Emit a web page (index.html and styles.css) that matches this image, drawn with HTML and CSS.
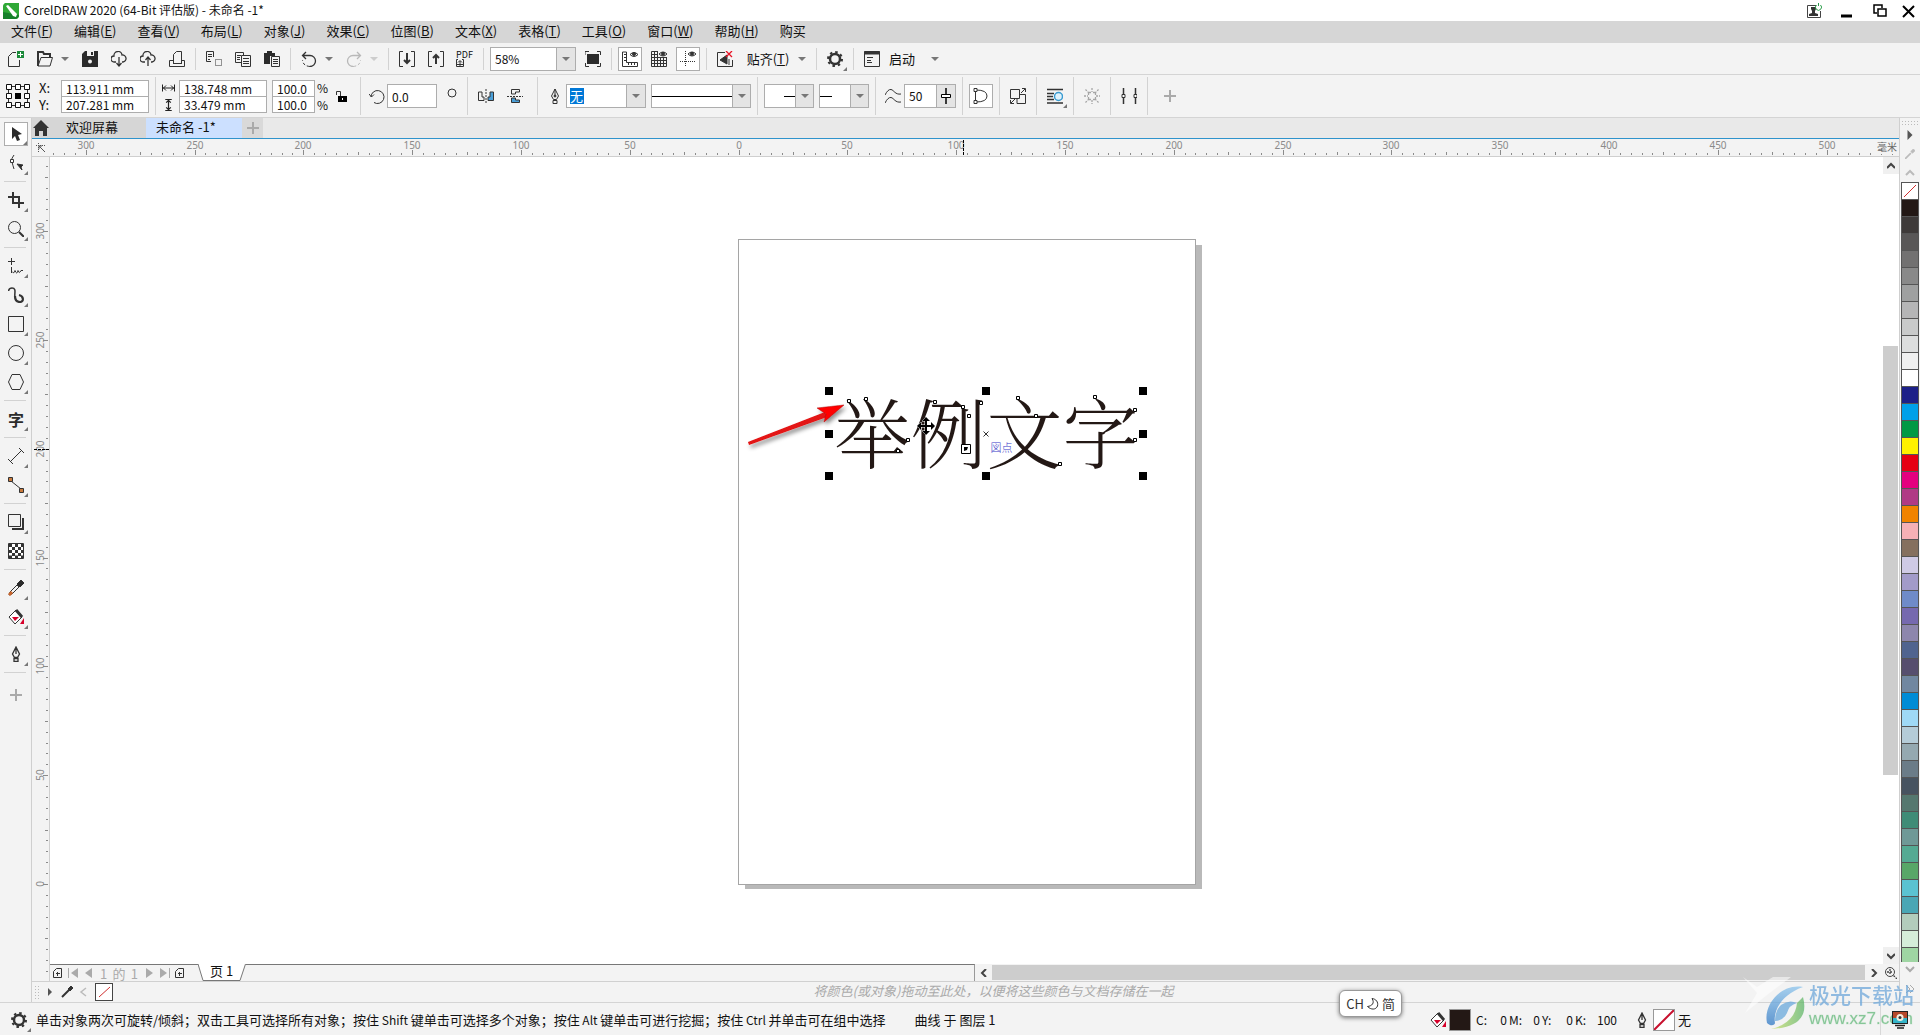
FILE: index.html
```html
<!DOCTYPE html>
<html lang="zh-CN">
<head>
<meta charset="utf-8">
<title>CorelDRAW 2020 (64-Bit 评估版) - 未命名 -1*</title>
<link rel="stylesheet" href="styles.css">
</head>
<body>
<header class="titlebar">
  <svg class="logo" viewBox="0 0 16 16"><path d="M2 0H16V12a4 4 0 0 1-4 4H0V4A4 4 0 0 1 2 0z" fill="#2fa836"/><path d="M0 9V16H12a4 4 0 0 0 4-4z" fill="#16802a"/><path d="M3 3l2-1 9 9-1 3-3-1z" fill="#fff"/></svg>
  <h1>CorelDRAW 2020 (64-Bit 评估版) - 未命名 -1*</h1>
  <div class="winbtns">
    <button class="win" aria-label="账户"><svg viewBox="0 0 16 16"><path d="M10 2.5H1.500V14.500H14.500V8" stroke="#444"/><path d="M3 13v-2l3-1V8L5 6V4h5v2L9 8v2l3 1v2z" fill="#333" stroke="none"/><path d="M10.500 2a3 3 0 1 0 4 0M12.500 0V3" stroke="#2a9d4a"/></svg></button>
    <button class="win" aria-label="最小化"><svg viewBox="0 0 16 16"><path d="M2 13h11" stroke="#000" stroke-width="3"/></svg></button>
    <button class="win" aria-label="还原"><svg viewBox="0 0 16 16"><path d="M5 10H2V2h8v3M6 6h8v7H6z" stroke="#000" stroke-width="1.500"/></svg></button>
    <button class="win" aria-label="关闭"><svg viewBox="0 0 16 16"><path d="M3 3l11 11M14 3L3 14" stroke="#000" stroke-width="2"/></svg></button>
  </div>
</header>

<nav class="menubar" aria-label="主菜单">
  <button>文件(<u>F</u>)</button><button>编辑(<u>E</u>)</button><button>查看(<u>V</u>)</button><button>布局(<u>L</u>)</button><button>对象(<u>J</u>)</button><button>效果(<u>C</u>)</button><button>位图(<u>B</u>)</button><button>文本(<u>X</u>)</button><button>表格(<u>T</u>)</button><button>工具(<u>O</u>)</button><button>窗口(<u>W</u>)</button><button>帮助(<u>H</u>)</button><button>购买</button>
</nav>

<div class="bar standard" role="toolbar" aria-label="标准">
  <button class="tool" aria-label="新建"><svg viewBox="0 0 16 16"><path d="M8 1.500H4.500L.5 5.500V15.500H11.500V9"/><path d="M9 0h7v7H9z" fill="#1b8a3a" stroke="none"/><path d="M12.500 1v5M10 3.500h5" stroke="#fff"/></svg></button>
  <div class="pair"><button class="tool" aria-label="打开"><svg viewBox="0 0 16 16"><path d="M1 15V1h5l1 2h6v3" stroke-width="2"/><path d="M1 15L4 6.500h11.500L13 15z" stroke-width="1"/></svg></button><button class="caret" aria-label="最近打开"></button></div>
  <button class="tool" aria-label="保存"><svg viewBox="0 0 16 16"><path d="M3 0H16V16H0V3z" fill="#2b2b2b" stroke="none"/><path d="M5 0h7v5H5z" fill="#f3f3f3" stroke="none"/><path d="M9 1h2v3H9z" fill="#2b2b2b" stroke="none"/><circle cx="8" cy="10.500" r="2" fill="#f3f3f3" stroke="none"/></svg></button>
  <button class="tool" aria-label="从云下载"><svg viewBox="0 0 16 16"><path d="M5 11H3a3 3 0 0 1 0-6 4 4 0 0 1 8-1 3.500 3.500 0 0 1 1 7h-1M8 6v9M5.500 12L8 15l2.500-3" stroke-width="1.300"/></svg></button>
  <button class="tool" aria-label="上传到云"><svg viewBox="0 0 16 16"><path d="M5 11H3a3 3 0 0 1 0-6 4 4 0 0 1 8-1 3.500 3.500 0 0 1 1 7h-1M8 15V6M5.500 9L8 6l2.500 3" stroke-width="1.300"/></svg></button>
  <button class="tool" aria-label="打印"><svg viewBox="0 0 16 16"><path d="M4.500 12V3.500l3-3h5V12M.5 9.500H4.500M12.500 9.500h3v6H.5v-6M4 12.500h9"/></svg></button>
  <i class="sep"></i>
  <button class="tool" aria-label="剪切"><svg viewBox="0 0 16 16"><path d="M5 10.500H.5V.5h7V6M2 3.500h4M2 5.500h4M2 8.500h2" /><path d="M9.500 8.500h6v6h-6z" stroke-dasharray="1 1"/></svg></button>
  <button class="tool" aria-label="复制"><svg viewBox="0 0 16 16"><path d="M6 11.500H.5V1.500h8V4M2 4.500h4M2 6.500h3M2 8.500h3M6.500 4.500h9v11h-9zM8 7.500h6M8 10.500h6M8 12.500h6"/></svg></button>
  <button class="tool" aria-label="粘贴"><svg viewBox="0 0 16 16"><path d="M0 2h3V0h5v2h3v3H6v8H0z" fill="#2b2b2b" stroke="none"/><path d="M7.500 5.500h8v10h-8zM9 8.500h5M9 10.500h5M9 12.500h5"/></svg></button>
  <i class="sep"></i>
  <div class="pair"><button class="tool" aria-label="撤消"><svg viewBox="0 0 16 16"><path d="M2 4.500H9A5.500 5.500 0 0 1 9 15.500M5 1L1.500 4.500 5 8" stroke-width="1.300"/><path d="M9 15.500Q2 15 1.500 9" stroke-dasharray="3 2"/></svg></button><button class="caret" aria-label="撤消列表"></button></div>
  <div class="pair off"><button class="tool" aria-label="重做" disabled><svg viewBox="0 0 16 16"><path d="M14 4.500H7A5.500 5.500 0 0 0 7 15.500M11 1l3.500 3.500L11 8" stroke-width="1.300"/><path d="M7 15.500Q14 15 14.500 9" stroke-dasharray="3 2"/></svg></button><button class="caret" aria-label="重做列表" disabled></button></div>
  <i class="sep"></i>
  <button class="tool" aria-label="导入"><svg viewBox="0 0 16 16"><path d="M4 .5H.5v15H4M12 .5h3.500v15H12"/><path d="M8 2v10M5 9l3 3 3-3" stroke-width="2"/></svg></button>
  <button class="tool" aria-label="导出"><svg viewBox="0 0 16 16"><path d="M4 .5H.5v15H4M12 .5h3.500v15H12"/><path d="M8 13V4M5 7l3-3 3 3" stroke-width="2"/></svg></button>
  <button class="tool pdf" aria-label="发布为 PDF"><span>PDF</span><svg viewBox="0 0 8 8"><path d="M2 .5H.5v7h7v-7H6M4 7V2M2 3.500L4 1.500l2 2M1 5.500h6"/></svg></button>
  <i class="sep"></i>
  <div class="combo w86"><input aria-label="缩放级别" value="58%"><button class="drop" aria-label="缩放列表"></button></div>
  <button class="tool" aria-label="全屏预览"><svg viewBox="0 0 16 16"><path d="M2 3h12v10H2z" fill="#2b2b2b" stroke="none"/><path d="M0 4V.5h4M12 .5h3.500V4M15.500 12v3.500H12M4 15.500H.5V12"/></svg></button>
  <i class="sep"></i>
  <button class="tool on" aria-label="显示标尺"><svg viewBox="0 0 16 16"><path d="M.5 1v14.500h15v-4h-11V1zM2 3.500h2M2 6.500h2M2 9.500h2M6.500 12v2M9.500 12v2M12.500 12v2" /><path d="M8 3.500q4-4 8 0-4 4-8 0z"/><circle cx="12" cy="3" r="1.500" fill="#333"/></svg></button>
  <button class="tool" aria-label="显示网格"><svg viewBox="0 0 16 16"><path d="M.5.5V15.500h15V7M.5.5H7M3.500 0v16M6.500 0v16M9.500 6v10M12.500 6v10M0 3.500h7M0 6.500h16M0 9.500h16M0 12.500h16"/><path d="M8 3q4-4 8 0-4 4-8 0z"/><circle cx="12" cy="2.800" r="1.500" fill="#333"/></svg></button>
  <button class="tool on" aria-label="显示辅助线"><svg viewBox="0 0 16 16"><path d="M5.500 0v16M0 10.500h16" stroke-dasharray="1 1"/><path d="M8 3q4-4 8 0-4 4-8 0z"/><circle cx="12" cy="2.800" r="1.500" fill="#333"/></svg></button>
  <i class="sep"></i>
  <button class="tool" aria-label="贴齐关闭"><svg viewBox="0 0 16 16"><path d="M8 1.500H.5v14h15V9"/><path d="M10 4L3 9l7 4zM12 8v6" fill="#333"/><path d="M9 0l6 6M15 0L9 6" stroke="#e81123" stroke-width="1.300"/></svg></button>
  <div class="pair"><button class="text snap">贴齐(<u>T</u>)</button><button class="caret" aria-label="贴齐列表"></button></div>
  <i class="sep"></i>
  <button class="tool fly" aria-label="选项"><svg viewBox="0 0 16 16"><circle cx="8" cy="8" r="5" stroke-width="2.500"/><circle cx="8" cy="8" r="7" stroke-width="2" stroke-dasharray="2.500 3"/></svg></button>
  <i class="sep"></i>
  <button class="tool" aria-label="启动图标"><svg viewBox="0 0 16 16"><path d="M.5.5h15v15H.5zM3 6.500h6M3 9.500h4M3 11.500h5"/><path d="M0 2h16" stroke-width="3"/></svg></button>
  <div class="pair launch"><button class="text">启动</button><button class="caret" aria-label="启动列表"></button></div>
</div>

<div class="bar property" role="toolbar" aria-label="属性栏">
  <button class="tool origin" aria-label="对象原点"><svg viewBox="0 0 24 24"><path d="M2.500 2.500h19v19h-19z"/><path d="M.5.5h5v5h-5zM9.500.5h5v5h-5zM18.500.5h5v5h-5zM.5 9.500h5v5h-5zM18.500 9.500h5v5h-5zM.5 18.500h5v5h-5zM9.500 18.500h5v5h-5zM18.500 18.500h5v5h-5z" fill="#fff" stroke="#111"/><path d="M9 9h6v6H9z" fill="#000" stroke="none"/></svg></button>
  <div class="fields xy"><label for="px">X:</label><input id="px" value="113.911 mm"><label for="py">Y:</label><input id="py" value="207.281 mm"></div>
  <i class="sep"></i>
  <div class="fields size"><label for="sw" aria-label="宽度"><svg viewBox="0 0 13 9"><path d="M.5 1v7M12.500 1v7M1 4.500h11M4 2L1.500 4.500 4 7M9 2l2.500 2.500L9 7"/></svg></label><input id="sw" value="138.748 mm"><label for="sh" aria-label="高度"><svg viewBox="0 0 13 13"><path d="M3 .5h7M3 12.500h7M6.500 1v11M4 4l2.500-2.500L9 4M4 9l2.500 2.500L9 9" stroke-width="1.300"/></svg></label><input id="sh" value="33.479 mm"></div>
  <div class="fields pct"><input aria-label="水平缩放" value="100.0"><span>%</span><input aria-label="垂直缩放" value="100.0"><span>%</span></div>
  <button class="tool" aria-label="锁定比率"><svg viewBox="0 0 16 16"><path d="M2.500 7V3.500h4V8"/><path d="M4 8h9v6H4z" fill="#000" stroke="none"/><path d="M8 10h1v2H8z" fill="#fff" stroke="none"/></svg></button>
  <i class="sep"></i>
  <div class="angle"><svg class="ic" viewBox="0 0 16 16"><path d="M2 9A6.500 6.500 0 1 1 5 14.500M0 6l2.500 3L5 6.500" /></svg><input aria-label="旋转角度" value="0.0"></div>
  <svg class="ic deg" viewBox="0 0 16 16"><circle cx="8" cy="5" r="4"/></svg>
  <i class="sep"></i>
  <button class="tool" aria-label="水平镜像"><svg viewBox="0 0 16 16"><path d="M.5 4v8.500H6V9H4V4z"/><path d="M15.500 4v8.500H10V9h2V4z" fill="#4a9fd8"/><path d="M8 1v14" stroke-dasharray="2 1"/></svg></button>
  <button class="tool" aria-label="垂直镜像"><svg viewBox="0 0 16 16"><path d="M4.500 6V1.500h8V4h-4v2z"/><path d="M4.500 10v4.500h8V12h-4v-2z" fill="#4a9fd8"/><path d="M0 8.500h16" stroke-dasharray="2 1"/></svg></button>
  <i class="sep wide"></i>
  <svg class="ic pen" viewBox="0 0 16 16"><path d="M8 1L4.500 8l2 3.500h3l2-3.500zM8 1v7M6 12.500h4v3H6z"/><circle cx="8" cy="8" r="1" fill="#333"/></svg>
  <div class="combo w80"><input class="marked" aria-label="轮廓宽度" value="无"><button class="drop" aria-label="轮廓宽度列表"></button></div>
  <div class="pick w100"><select aria-label="线条样式"></select><span class="stroke"></span></div>
  <i class="sep"></i>
  <div class="pick w50"><select aria-label="起始箭头"></select><span class="stroke end"></span></div>
  <div class="pick w50"><select aria-label="终止箭头"></select><span class="stroke start"></span></div>
  <i class="sep"></i>
  <svg class="ic smooth" viewBox="0 0 16 16"><path d="M0 7Q3 1 6 1.500C9 2 10 7 16 6M0 15Q3 9 6 9.500C9 10 10 15 16 14"/></svg>
  <div class="combo w52"><input aria-label="手绘平滑" value="50"><button class="slide" aria-label="平滑滑块"><svg viewBox="0 0 10 16"><path d="M5 0v16" stroke="#000" stroke-width="1.500"/><path d="M.5 6.500h9v3h-9z" fill="#fff" stroke="#000"/></svg></button></div>
  <i class="sep"></i>
  <button class="tool on" aria-label="闭合曲线"><svg viewBox="0 0 16 16"><path d="M3 2Q14 2 14 8T3 14M2.500 4v8"/><path d="M1 .5h3v3H1zM1 12.500h3v3H1z" fill="#fff"/></svg></button>
  <i class="sep"></i>
  <button class="tool" aria-label="选择工具"><svg viewBox="0 0 16 16"><path d="M.5 1.500h9v9h-9zM7 10.500v5h8.500V6.500H10M11 5l4-4M12 .5h3.500V4M5 11l-4 4M.5 12v3.500H4"/></svg></button>
  <i class="sep"></i>
  <button class="tool fly" aria-label="文本换行"><svg viewBox="0 0 16 16"><path d="M0 1.500h16M0 5.500h7M0 8.500h6M0 11.500h7M0 15h16" stroke-width="1.500"/><circle cx="11.500" cy="8.500" r="4" stroke="#3a9bd0" fill="#dff2fc" stroke-width="1.500"/></svg></button>
  <i class="sep"></i>
  <button class="tool faint" aria-label="对称" disabled><svg viewBox="0 0 16 16"><path d="M5 5L1 1M11 5l4-4M5 11l-4 4M11 11l4 4M8 0v4M8 12v4M0 8h4M12 8h4M5 4.500h2M9 4.500h2M5 11.500h2M9 11.500h2M4.500 5v2M4.500 9v2M11.500 5v2M11.500 9v2" stroke-dasharray="2 1" stroke-width="1.300"/></svg></button>
  <i class="sep"></i>
  <button class="tool" aria-label="对齐与分布"><svg viewBox="0 0 16 16"><path d="M2.500 0v16M14.500 0v16" stroke-width="1.500"/><path d="M1 6.500h3v3H1zM13 6.500h3v3h-3z" fill="#fff"/></svg></button>
  <i class="sep"></i>
  <button class="tool more" aria-label="快速自定义"><svg viewBox="0 0 16 16"><path d="M8 2v12M2 8h12" stroke="#aaa" stroke-width="2"/></svg></button>
</div>

<main class="work">
  <aside class="toolbox" role="toolbar" aria-label="工具箱">
    <button class="tool on fly" aria-label="选择"><svg viewBox="0 0 16 16"><path d="M4 1v12l3-3 2 5 3-1-2-5 4-1z" fill="#2b2b2b" stroke="none"/></svg></button>
    <button class="tool fly" aria-label="形状"><svg viewBox="0 0 16 16"><path d="M6 0Q3 3 4 7T6 14" /><path d="M2.500 4.500h3v3h-3z" fill="#fff"/><path d="M9 9l6 1-2 2 1 3z" fill="#2b2b2b"/></svg></button>
    <i class="sep"></i>
    <button class="tool fly" aria-label="裁剪"><svg viewBox="0 0 16 16"><path d="M0 5h11v11M5 0v11h11" stroke-width="2"/></svg></button>
    <button class="tool fly" aria-label="缩放"><svg viewBox="0 0 16 16"><circle cx="6.500" cy="6.500" r="6"/><path d="M11 11l5 5" stroke-width="2"/></svg></button>
    <i class="sep"></i>
    <button class="tool fly" aria-label="手绘"><svg viewBox="0 0 16 16"><path d="M3.500 0v7M0 3.500h7M3.500 9v6M4 13.500q2 3 3-1 2 5 3 0 1 4 3 0l2 0"/></svg></button>
    <button class="tool fly" aria-label="艺术笔"><svg viewBox="0 0 16 16"><path d="M.5 4Q1 1 4 1c5 0 2 6 3 9" stroke-width="1.500"/><path d="M7 9q0 6 5 6c4 0 4-6-1-7" stroke-width="2.200"/></svg></button>
    <button class="tool fly" aria-label="矩形"><svg viewBox="0 0 16 16"><path d="M.5.5h15v15H.5z"/></svg></button>
    <button class="tool fly" aria-label="椭圆形"><svg viewBox="0 0 16 16"><circle cx="8" cy="8" r="7.500"/></svg></button>
    <button class="tool fly" aria-label="多边形"><svg viewBox="0 0 16 16"><path d="M4 .5h8L15.500 8 12 15.500H4L.5 8z"/></svg></button>
    <i class="sep"></i>
    <button class="tool fly glyph">字</button>
    <i class="sep"></i>
    <button class="tool fly" aria-label="平行度量"><svg viewBox="0 0 16 16"><path d="M2 14L14 2M0 11l5 5M11 0l5 5"/></svg></button>
    <button class="tool fly" aria-label="直线连接器"><svg viewBox="0 0 16 16"><path d="M3 4l10 8"/><path d="M.5.5h4v4h-4zM11.500 11.500h4v4h-4z" fill="#c97a3c"/></svg></button>
    <i class="sep"></i>
    <button class="tool fly" aria-label="阴影"><svg viewBox="0 0 16 16"><path d="M.5.500h12v12H.5z"/><path d="M15 4v11H4" stroke-width="2"/></svg></button>
    <button class="tool" aria-label="透明度"><svg viewBox="0 0 16 16"><path d="M.5.5h15v15H.5z" fill="#fff"/><path d="M1 2.500h14M1 8.500h14M1 14h14" stroke-width="3" stroke-dasharray="3 3"/><path d="M4 5.500h11M4 11.500h11" stroke-width="3" stroke-dasharray="3 3"/></svg></button>
    <i class="sep"></i>
    <button class="tool fly" aria-label="颜色滴管"><svg viewBox="0 0 16 16"><path d="M1 15l1-3 7-7 2 2-7 7z"/><path d="M1 15l3-3" stroke="#c9652c" stroke-width="3"/><path d="M9 4l4-4 3 3-4 4z" fill="#2b2b2b"/></svg></button>
    <button class="tool fly" aria-label="交互式填充"><svg viewBox="0 0 16 16"><path d="M1 8l7-7 6 7-7 7z" fill="#fff"/><path d="M8 1l6 7" stroke-width="3"/><path d="M4 8h7l-4 4z" fill="#d6002a" stroke="none"/><path d="M12 15l4-6v6z" fill="#d6002a" stroke="none"/></svg></button>
    <i class="sep"></i>
    <button class="tool fly" aria-label="轮廓笔"><svg viewBox="0 0 16 16"><path d="M8 1L4.500 8l2 3.500h3l2-3.500zM8 1v7M6 12.500h4v3H6z" stroke-width="1.300"/></svg></button>
    <i class="sep"></i>
    <button class="tool more" aria-label="自定义工具箱"><svg viewBox="0 0 16 16"><path d="M8 2v12M2 8h12" stroke="#aaa" stroke-width="2"/></svg></button>
  </aside>

  <section class="doc">
    <div class="tabs">
      <button class="home" aria-label="主页"><svg viewBox="0 0 16 16"><path d="M8 0l8 8h-2v8h-4v-5H6v5H2V8H0z" fill="#333"/></svg></button>
      <button class="tab">欢迎屏幕</button><button class="tab active">未命名 -1*</button><button class="addtab" aria-label="新建文档"><svg viewBox="0 0 12 12"><path d="M6 0v12M0 6h12" stroke="#aaa" stroke-width="2"/></svg></button>
    </div>
    <div class="hruler">
      <button class="corner" aria-label="标尺原点"><svg viewBox="0 0 10 10"><path d="M0 2.500h10M2.500 0v10" stroke-dasharray="1 1"/><path d="M3 3l6 6M3 3v3M3 3h3"/></svg></button>
      <svg id="hruler" aria-hidden="true"></svg><span class="unit">毫米</span>
    </div>
    <div class="middle">
      <svg class="vruler" id="vruler" aria-hidden="true"></svg>
      <div class="view">
        <div class="viewrow">
          <div class="canvas">
            <div class="page" id="page">
              <span class="artwork">举例文字</span>
              <svg class="overlay" viewBox="0 0 457 646">
                <defs><filter id="soft" x="-20%" y="-20%" width="140%" height="160%"><feDropShadow dx="2" dy="3" stdDeviation="2" flood-opacity=".45"/></filter></defs>
                <g filter="url(#soft)" fill="#e31212"><path d="M10 203l77-30 2 5-78 28z"/><path d="M79 169l27-3-20 17 2-8z" fill="#f00" stroke="#a11" stroke-width=".5"/></g>
                <path d="M87 148h8v8h-8zM244 148h8v8h-8zM401 148h8v8h-8zM87 191h8v8h-8zM401 191h8v8h-8zM87 233h8v8h-8zM244 233h8v8h-8zM401 233h8v8h-8z"/>
                <path d="M109.500 160.500h3v3h-3zM126.500 158.500h3v3h-3zM168.500 199.500h3v3h-3zM158.500 210.500h3v3h-3zM195.500 161.500h3v3h-3zM223.500 166.500h3v3h-3zM229.500 175.500h3v3h-3zM241.500 162.500h3v3h-3zM278.500 157.500h3v3h-3zM296.500 175.500h3v3h-3zM320.500 223.500h3v3h-3zM355.500 156.500h3v3h-3zM395.500 169.500h3v3h-3zM395.500 199.500h3v3h-3z" fill="#fff" stroke="#000"/>
                <path d="M223.500 205.500h9v9h-9z" fill="#fff" stroke="#000"/><path d="M226 208h4l-1 3-3 1z"/>
                <path d="M245.500 192.500l5 5M250.500 192.500l-5 5" stroke="#333"/>
                <path d="M188 178l4 4h-3v4h4v-3l4 4-4 4v-3h-4v4h3l-4 4-4-4h3v-4h-4v3l-4-4 4-4v3h4v-4h-3z" stroke="#fff" stroke-width="1" paint-order="stroke"/>
              </svg>
              <span class="hint">図点</span>
            </div>
          </div>
          <div class="vscroll"><button aria-label="向上滚动"><svg viewBox="0 0 8 8"><path d="M0 6l4-4 4 4"/></svg></button><i class="gap"></i><i class="thumb"></i><i class="gap"></i><button aria-label="向下滚动"><svg viewBox="0 0 8 8"><path d="M0 2l4 4 4-4"/></svg></button></div>
        </div>
        <div class="pagerow">
          <div class="pagenav">
            <button aria-label="添加页面"><svg viewBox="0 0 10 10"><path d="M3.500.5h5v9h-8v-6zM4.500 4v4M3 5.500h4" stroke="#333"/></svg></button>
            <button aria-label="首页"><svg viewBox="0 0 10 10"><path d="M.5 0v10" stroke="#aaa"/><path d="M10 0v10L3 5z" fill="#aaa"/></svg></button>
            <button aria-label="上一页"><svg viewBox="0 0 10 10"><path d="M9 0v10L2 5z" fill="#aaa"/></svg></button>
            <span>1</span><span>的</span><span>1</span>
            <button aria-label="下一页"><svg viewBox="0 0 10 10"><path d="M1 0v10l7-5z" fill="#aaa"/></svg></button>
            <button aria-label="末页"><svg viewBox="0 0 10 10"><path d="M9.500 0v10" stroke="#aaa"/><path d="M0 0v10l7-5z" fill="#aaa"/></svg></button>
            <button aria-label="在后面添加页面"><svg viewBox="0 0 10 10"><path d="M3.500.5h5v9h-8v-6zM4.500 4v4M3 5.500h4" stroke="#333"/></svg></button>
          </div>
          <button class="pagetab"><svg viewBox="0 0 48 17"><path d="M0 0l5 16.500h37L47.500 0" fill="#fff" stroke="#777"/></svg><span>页 1</span></button>
          <i class="rest"></i>
          <div class="hscroll"><button aria-label="向左滚动"><svg viewBox="0 0 8 8"><path d="M6 0L2 4l4 4"/></svg></button><i class="thumb"></i><button aria-label="向右滚动"><svg viewBox="0 0 8 8"><path d="M2 0l4 4-4 4"/></svg></button><button aria-label="导航器"><svg class="navi" viewBox="0 0 12 12"><circle cx="5" cy="5" r="4.500" stroke-width="1"/><path d="M8.500 8.500L12 12M5 2v6M2 5h6" stroke-width="1.300" stroke-dasharray="2 1"/></svg></button></div>
        </div>
      </div>
    </div>
    <div class="docpalette">
      <div class="dpleft"><i class="grip"></i><button aria-label="文档调色板菜单"><svg viewBox="0 0 12 12"><path d="M4 2v8l4-4z" fill="#555"/></svg></button><button aria-label="颜色滴管"><svg viewBox="0 0 12 12"><path d="M1 11l7-7" stroke="#333" stroke-width="2"/><path d="M7 3l3-3 2 2-3 3z" fill="#333" stroke="#333"/></svg></button><button aria-label="向左"><svg viewBox="0 0 12 12"><path d="M8 2L3 6l5 4" stroke="#bbb" stroke-width="1.500"/></svg></button><button class="none" aria-label="无颜色"><svg viewBox="0 0 16 16"><path d="M3 13L14 3" stroke="#d03030"/></svg></button></div>
      <p>将颜色(或对象)拖动至此处，以便将这些颜色与文档存储在一起</p>
      <i></i>
    </div>
  </section>

  <aside class="palette" aria-label="默认调色板">
    <i class="grip"></i>
    <button aria-label="调色板菜单"><svg viewBox="0 0 6 8"><path d="M1 0v8l4-4z" fill="#555"/></svg></button>
    <button aria-label="滴管"><svg viewBox="0 0 12 12"><path d="M0 12l7-7" stroke="#bbb" stroke-width="2"/><path d="M7 3l3-3 2 2-3 3z" fill="#bbb" stroke="#bbb"/></svg></button>
    <button aria-label="向上"><svg viewBox="0 0 10 8"><path d="M1 6l4-4 4 4" stroke="#bbb" stroke-width="2"/></svg></button>
    <div class="swatches" id="swatches"><button class="swatch" aria-label="无颜色"><svg viewBox="0 0 16 16"><path d="M2 14L14 2" stroke="#d03030"/></svg></button></div>
    <button class="down" aria-label="向下"><svg viewBox="0 0 10 8"><path d="M1 2l4 4 4-4" stroke="#aaa" stroke-width="2"/></svg></button>
    <button class="expand" aria-label="展开"><svg viewBox="0 0 10 8"><path d="M1 0l4 4-4 4M5 0l4 4-4 4" stroke="#aaa"/></svg></button>
  </aside>
</main>

<footer class="status">
  <button class="tool fly" aria-label="状态栏选项"><svg viewBox="0 0 16 16"><circle cx="8" cy="8" r="5" stroke-width="2.500"/><circle cx="8" cy="8" r="7" stroke-width="2" stroke-dasharray="2.500 3"/></svg></button>
  <span class="tip">单击对象两次可旋转/倾斜；双击工具可选择所有对象；按住<kbd> Shift </kbd>键单击可选择多个对象；按住<kbd> Alt </kbd>键单击可进行挖掘；按住<kbd> Ctrl </kbd>并单击可在组中选择</span>
  <span class="layer">曲线 于 图层 1</span>
  <div class="inks">
    <svg class="ic" viewBox="0 0 16 16"><path d="M1 8l7-7 6 7-7 7z" fill="#fff"/><path d="M8 1l6 7" stroke-width="3"/><path d="M4 8h7l-4 4z" fill="#d6002a" stroke="none"/><path d="M12 15l4-6v6z" fill="#d6002a" stroke="none"/></svg>
    <i class="chip fill"></i>
    <span class="cmyk"><b>C:</b><b>0</b><b>M:</b><b>0</b><b>Y:</b><b>0</b><b>K:</b><b>100</b></span>
    <svg class="ic" viewBox="0 0 16 16"><path d="M8 1L4.500 8l2 3.500h3l2-3.500zM8 1v7M6 12.500h4v3H6z" stroke-width="1.300"/></svg>
    <svg class="chip" viewBox="0 0 20 20"><path d="M0 20L20 0" stroke="#c8102e" stroke-width="2"/></svg>
    <span>无</span>
  </div>
  <div class="proof"><svg viewBox="0 0 16 18"><path d="M0 0h16v13H0z" fill="#222"/><path d="M1 1h14v6H1z" fill="#b5482a"/><path d="M1 7h14v5H1z" fill="#35b5c9"/><circle cx="8" cy="6.500" r="3.500" fill="#f5efe0"/><circle cx="8" cy="6.500" r="1.500" fill="#333"/><path d="M3 14.500h10M5 17h7" stroke="#222" stroke-width="1.500"/></svg></div>
</footer>

<div class="ime"><span>CH</span><svg viewBox="0 0 12 12"><path d="M5 .500C8 5 5 8 .500 8.500 4 12 9 12 10.500 8 11.500 4 9 1 5 .500z" fill="none" stroke="#333"/></svg><span>简</span></div>
<div class="mark" aria-hidden="true">
  <svg viewBox="0 0 66 60"><defs><linearGradient id="mb" x2="0" y2="1"><stop offset="0" stop-color="#8cc4ec"/><stop offset="1" stop-color="#2f78c4"/></linearGradient><linearGradient id="mg"><stop offset="0" stop-color="#cfe06a"/><stop offset="1" stop-color="#5db56a"/></linearGradient></defs><path d="M0 2l14 10 16-10h18L24 20 2 38l12-20z" fill="#fff" opacity=".7"/><path d="M60 12C38 8 20 30 24 48c4 4 8 2 8 0-2-12 6-28 28-36z" fill="url(#mb)"/><path d="M38 30q8-6 16-2-8 2-10 10-4 8-12 8 0-10 6-16z" fill="#6aa9dc"/><path d="M60 22q8 30-32 32 24-6 26-26z" fill="url(#mg)"/></svg>
  <div><strong>极光下载站</strong><em>www.xz7.com</em></div>
</div>
<script src="app.js"></script>
</body>
</html>
```
FILE: styles.css
```css
* { box-sizing: border-box; }

body {
  margin: 0;
  height: 100vh;
  display: flex;
  flex-direction: column;
  overflow: hidden;
  background: #f3f3f3;
  color: #111;
  font: 13px/18px "Noto Sans CJK SC", "Noto Sans", sans-serif;
}

button, input, select { font: inherit; color: inherit; }
button { padding: 0; border: 0; background: none; display: flex; align-items: center; justify-content: center; }
input { min-width: 0; border: 1px solid #adadad; background: #fff; padding: 0 4px; font-size: 12px; }
svg { display: block; fill: none; }
i { display: block; font-style: normal; }

/* title and menu */
.titlebar { display: flex; align-items: center; height: 21px; padding-left: 3px; background: #fff; flex: none; }
.titlebar h1 { margin: 0 0 0 5px; padding-bottom: 2px; font-size: 12px; font-weight: 400; flex: 1; }
.logo { width: 16px; height: 16px; }
.winbtns { display: flex; gap: 17px; padding-right: 4px; }
.win svg { width: 16px; height: 16px; }
.win:last-child { margin-left: -5px; }
.menubar { display: flex; gap: 21px; height: 22px; padding: 0 0 2px 11px; background: #d6d6d6; flex: none; }
.menubar button { white-space: nowrap; }

/* toolbars */
.bar { display: flex; align-items: center; gap: 5px; padding-left: 4px; border-bottom: 1px solid #d4d4d4; flex: none; }
.standard { height: 32px; }
.property { height: 43px; }
.sep { width: 1px; height: 22px; margin: 0 1px; background: #d2d2d2; flex: none; }
.sep.wide { margin-left: 5px; }
.property .sep { height: 38px; }
.tool { position: relative; width: 24px; height: 24px; flex: none; }
.tool svg, .ic { width: 16px; height: 16px; stroke: #333; flex: none; }
.tool.on { background: #fff; border: 1px solid #adadad; }
.fly::after { content: ""; position: absolute; right: 0; bottom: 0; border: 2px solid transparent; border-right-color: #777; border-bottom-color: #777; }
.pair { display: flex; align-items: center; }
.caret { width: 16px; height: 24px; }
.caret::after, .drop::after { content: ""; border: 4px solid transparent; border-top-color: #777; border-bottom: 0; }
.off { opacity: .3; }
.faint { opacity: .4; }
.snap { width: 52px; }
.launch { gap: 12px; }
.pdf { flex-direction: column; font-size: 9px; line-height: 9px; align-items: flex-start; padding-left: 3px; }
.tool.pdf svg { width: 8px; height: 8px; }

.combo { display: flex; height: 24px; border: 1px solid #adadad; background: #fff; flex: none; }
.combo input { border: 0; flex: 1; }
.combo button { width: 19px; background: #e4e4e4; border-left: 1px solid #adadad; flex: none; }
.combo .marked { flex: none; width: 14px; height: 16px; margin: 3px auto 0 3px; padding: 0; font-size: 13px; background: #0078d7; color: #fff; }
.slide svg { width: 10px; height: 16px; }
.w86 { width: 86px; }
.w80 { width: 80px; }
.w100 { width: 100px; }
.w50 { width: 50px; }
.w52 { width: 52px; }
.pick { position: relative; height: 24px; flex: none; }
.pick select { appearance: none; width: 100%; height: 24px; border: 1px solid #adadad; border-radius: 0; background: linear-gradient(to left, #e4e4e4 17px, #adadad 17px, #adadad 18px, #fff 18px); }
.pick::after { content: ""; position: absolute; right: 5px; top: 10px; border: 4px solid transparent; border-top-color: #777; border-bottom: 0; pointer-events: none; }
.stroke { position: absolute; left: 1px; right: 19px; top: 12px; height: 1px; background: #000; pointer-events: none; }
.stroke.end { left: 20px; }
.stroke.start { right: 37px; }

.origin { width: 28px; }
.tool.origin svg { width: 24px; height: 24px; }
.fields { display: grid; grid-auto-rows: 17px; align-items: center; height: 33px; }
.fields input { height: 17px; line-height: 15px; width: 100%; }
.fields input:last-of-type { margin-top: -1px; }
.xy { grid-template-columns: 24px 88px; }
.xy label { padding-left: 2px; }
.size { grid-template-columns: 17px 88px; }
.size svg { width: 13px; height: 12px; stroke: #222; }
.pct { grid-template-columns: 43px 10px; }
.pct span { padding-left: 2px; font-size: 12px; }
.angle { display: flex; align-items: center; gap: 2px; padding-left: 2px; }
.angle input { width: 50px; height: 24px; }
.deg { margin: 0 1px 0 2px; }
.pen { margin: 0 -2px 0 3px; }
.smooth { margin-left: 3px; margin-right: -2px; }
.bar .more { margin-left: 4px; }

/* work area */
.work { flex: 1; min-height: 0; display: flex; }
.toolbox { width: 32px; border-right: 1px solid #cfcfcf; padding: 4px 3px 0 4px; display: flex; flex-direction: column; align-items: flex-start; gap: 5px; flex: none; }
.toolbox .sep { width: 22px; height: 1px; margin: 1px 0; }
.toolbox .more { margin-top: 4px; }
.glyph { font-size: 16px; font-weight: 700; color: #2b2b2b; }
.doc { flex: 1; min-width: 0; display: flex; flex-direction: column; }
.tabs { height: 20px; display: flex; background: #e9e9e9; flex: none; }
.home { width: 18px; background: #d6d6d6; }
.home svg { width: 16px; height: 16px; }
.tab { width: 96px; background: #d6d6d6; justify-content: flex-start; padding: 0 0 2px 16px; }
.tab.active { background: #cce0ff; padding-left: 10px; }
.addtab { width: 21px; background: #d9d9d9; }
.addtab svg { width: 12px; height: 12px; }
.hruler { position: relative; height: 19px; border-top: 1px solid #2f93cc; border-bottom: 1px solid #cfcfcf; display: flex; flex: none; }
.corner { width: 18px; }
.corner svg { width: 10px; height: 10px; stroke: #555; }
#hruler { flex: 1; height: 17px; overflow: visible; }
.unit { position: absolute; right: 2px; top: 0; font-size: 10px; line-height: 15px; color: #666; background: #f3f3f3; }
.tick { fill: #8a8a8a; }
.num { fill: #8a8a8a; font: 10px "Noto Sans", sans-serif; text-anchor: middle; }
.here { stroke: #000; stroke-dasharray: 3 1; }
.middle { flex: 1; min-height: 0; display: flex; }
.vruler { width: 18px; height: 100%; border-right: 1px solid #cfcfcf; flex: none; }
.view { flex: 1; min-width: 0; display: flex; flex-direction: column; }
.viewrow { flex: 1; min-height: 0; display: flex; background: #fff; }
.canvas { flex: 1; display: flex; align-items: center; justify-content: center; padding-top: 3px; overflow: hidden; }
.page { position: relative; width: 458px; height: 646px; border: 1px solid #a5a5a5; background: #fff; box-shadow: 6px 5px 0 -1px #b9b9b9, 7px 5px 0 -1px #b9b9b9; flex: none; }
.artwork { position: absolute; left: 96px; top: 153px; font: 300 76px/76px "Noto Serif CJK SC", "Noto Sans CJK SC", serif; color: #231815; white-space: nowrap; }
.overlay { position: absolute; left: -1px; top: -1px; width: 457px; height: 646px; fill: #000; }
.hint { position: absolute; left: 252px; top: 200px; font-size: 11px; line-height: 14px; font-weight: 300; color: #3a3ac8; }

.vscroll { width: 16px; display: flex; flex-direction: column; flex: none; }
.vscroll button { height: 17px; background: #f0f0f0; flex: none; }
.vscroll svg, .hscroll svg { width: 8px; height: 8px; stroke: #444; stroke-width: 2; }
.vscroll .gap { flex: 2; }
.vscroll .thumb { flex: 5; background: #cdcdcd; margin-right: 1px; }
.pagerow { height: 17px; display: flex; flex: none; }
.pagenav { display: flex; align-items: center; width: 148px; padding-right: 10px; border-top: 1px solid #777; color: #aaa; flex: none; }
.pagenav button, .pagenav span { flex: 1; text-align: center; line-height: 15px; }
.pagenav svg { width: 10px; height: 10px; }
.pagetab { position: relative; width: 48px; flex: none; }
.pagetab svg { width: 48px; height: 17px; }
.pagetab span { position: absolute; left: 12px; top: -1px; line-height: 16px; }
.rest { flex: 1; border-top: 1px solid #777; border-right: 1px solid #999; }
.hscroll { width: 924px; padding: 1px 0; display: flex; flex: none; }
.hscroll button { width: 17px; background: #f3f3f3; flex: none; }
.hscroll .thumb { flex: 1; background: #cdcdcd; }
.hscroll .navi { width: 12px; height: 12px; }

.docpalette { height: 21px; display: grid; grid-template-columns: 1fr auto 1fr; align-items: center; border-top: 1px solid #d0d0d0; flex: none; }
.docpalette p { margin: 0; padding: 0 0 2px 56px; font-style: italic; color: #aaa; }
.dpleft { display: flex; align-items: center; gap: 5px; padding-left: 2px; }
.grip { width: 5px; height: 15px; background: radial-gradient(#bbb 1px, transparent 1px) 0 0 / 3px 3px; }
.dpleft svg { height: 12px; width: 12px; }
.dpleft .none { width: 18px; height: 18px; border: 1px solid #444; background: #fff; }
.dpleft .none svg { width: 16px; height: 16px; }

.palette { width: 21px; border-left: 1px solid #cfcfcf; padding: 2px 2px 0 1px; display: flex; flex-direction: column; align-items: center; flex: none; }
.palette > .grip { width: 17px; height: 5px; }
.palette > button { height: 19px; flex: none; }
.palette > button svg { width: 10px; height: 10px; }
.swatches { flex: 1; min-height: 0; width: 18px; overflow: hidden; border: 1px solid #555; border-bottom: 0; }
.swatch { width: 100%; height: 17px; border-bottom: 1px solid #555; background: #fff; }
.swatch svg { width: 16px; height: 16px; }
.palette .down { height: 14px; }
.palette .expand { height: 26px; }

/* status bar */
.status { position: relative; height: 33px; display: flex; align-items: center; padding: 2px 0 0 7px; border-top: 1px solid #d4d4d4; white-space: nowrap; flex: none; }
.status kbd { font: inherit; font-size: 12px; }
.status .tip { margin-left: 5px; }
.status .layer { margin-left: 29px; }
.inks { display: flex; align-items: center; gap: 3px; margin-left: auto; }
.chip { width: 22px; height: 22px; border: 1px solid #999; background: #fff; }
.chip.fill { background: #231815; }
.cmyk { display: grid; grid-template-columns: 14px 19px 14px 19px 14px 19px 14px 30px; padding-left: 2px; width: 157px; font-size: 12px; }
.cmyk b { font-weight: 400; }
.cmyk b:nth-child(even) { text-align: right; padding-right: 2px; }
.proof { margin-left: 189px; padding: 5px 12px 6px 11px; border-left: 1px solid #d8d8d8; position: relative; z-index: 3; }
.proof svg { width: 16px; height: 18px; }

/* floating items above the window */
.ime { position: absolute; right: 518px; bottom: 18px; height: 27px; padding: 0 6px; display: flex; align-items: center; gap: 3px; background: #fff; border: 1px solid #999; border-radius: 6px; box-shadow: 0 1px 4px #777; color: #333; }
.ime svg { width: 12px; height: 12px; }
.mark { position: absolute; right: 6px; bottom: 0; display: flex; z-index: 2; opacity: .75; pointer-events: none; }
.mark svg { width: 66px; height: 60px; }
.mark div { display: flex; flex-direction: column; padding-top: 6px; }
.mark strong { font-size: 21px; line-height: 26px; font-weight: 500; color: #6fa8da; }
.mark em { font: 400 17px/24px "Liberation Sans", Arial, sans-serif; color: #62b87a; -webkit-text-stroke: 1px #62b87a33; }
```
FILE: app.js
```js
// Rulers: 50 mm is 108.8 px at the 58% zoom level.
const STEP = 108.8;
const NS = "http://www.w3.org/2000/svg";
const page = document.getElementById("page");

function add(svg, name, attrs, text) {
  const el = document.createElementNS(NS, name);
  for (const key in attrs) el.setAttribute(key, attrs[key]);
  if (text !== undefined) el.textContent = text;
  svg.appendChild(el);
}

function drawRuler(svg, vertical) {
  svg.replaceChildren();
  const box = svg.getBoundingClientRect();
  const sheet = page.getBoundingClientRect();
  const length = vertical ? box.height : box.width;
  const origin = vertical ? sheet.bottom - 1 - box.top : sheet.left + 1 - box.left;
  const first = Math.ceil(-origin / (STEP / 10));
  for (let i = first; ; i++) {
    const at = Math.round(origin + i * STEP / 10);
    if (at > length) break;
    const major = i % 10 === 0;
    const size = major ? 5 : i % 5 === 0 ? 3 : 2;
    if (vertical) add(svg, "rect", { class: "tick", x: 16 - size, y: at, width: size, height: 1 });
    else add(svg, "rect", { class: "tick", x: at, y: 16 - size, width: 1, height: size });
    if (!major) continue;
    const label = Math.abs(i * 5);
    if (vertical) add(svg, "text", { class: "num", transform: `translate(12 ${at}) rotate(-90)` }, label);
    else add(svg, "text", { class: "num", x: at, y: 10 }, label);
  }
  if (vertical) add(svg, "path", { class: "here", d: `M2 ${Math.round(origin - 435) + .5}H17` });
  else add(svg, "path", { class: "here", d: `M${Math.round(origin + 224) + .5} 1V17` });
}

function drawRulers() {
  drawRuler(document.getElementById("hruler"), false);
  drawRuler(document.getElementById("vruler"), true);
}
drawRulers();
addEventListener("resize", drawRulers);

const colours = ["#231815", "#3e3a39", "#595757", "#727171", "#898989", "#9fa0a0", "#b5b5b6", "#c9caca", "#dcdddd", "#efefef", "#ffffff", "#1d2088", "#00a0e9", "#009944", "#fff100", "#e60012", "#e4007f", "#b03a85", "#f08300", "#f5b0b5", "#85705f", "#cfcae5", "#a29bc9", "#6f8bc8", "#7669af", "#8d86ad", "#50648f", "#564e6e", "#7187a0", "#008cd6", "#9fd9f6", "#b5ccd8", "#95a9b1", "#6b7c88", "#475360", "#55786f", "#3f8c77", "#6f9997", "#54aa93", "#58a768", "#5bc2d1", "#4aa6b5", "#b3ccbc", "#d5ecd9", "#9fd5a3"];
const swatches = document.getElementById("swatches");
for (const colour of colours) {
  const b = document.createElement("button");
  b.className = "swatch";
  b.style.backgroundColor = colour;
  b.setAttribute("aria-label", colour);
  swatches.appendChild(b);
}
```
